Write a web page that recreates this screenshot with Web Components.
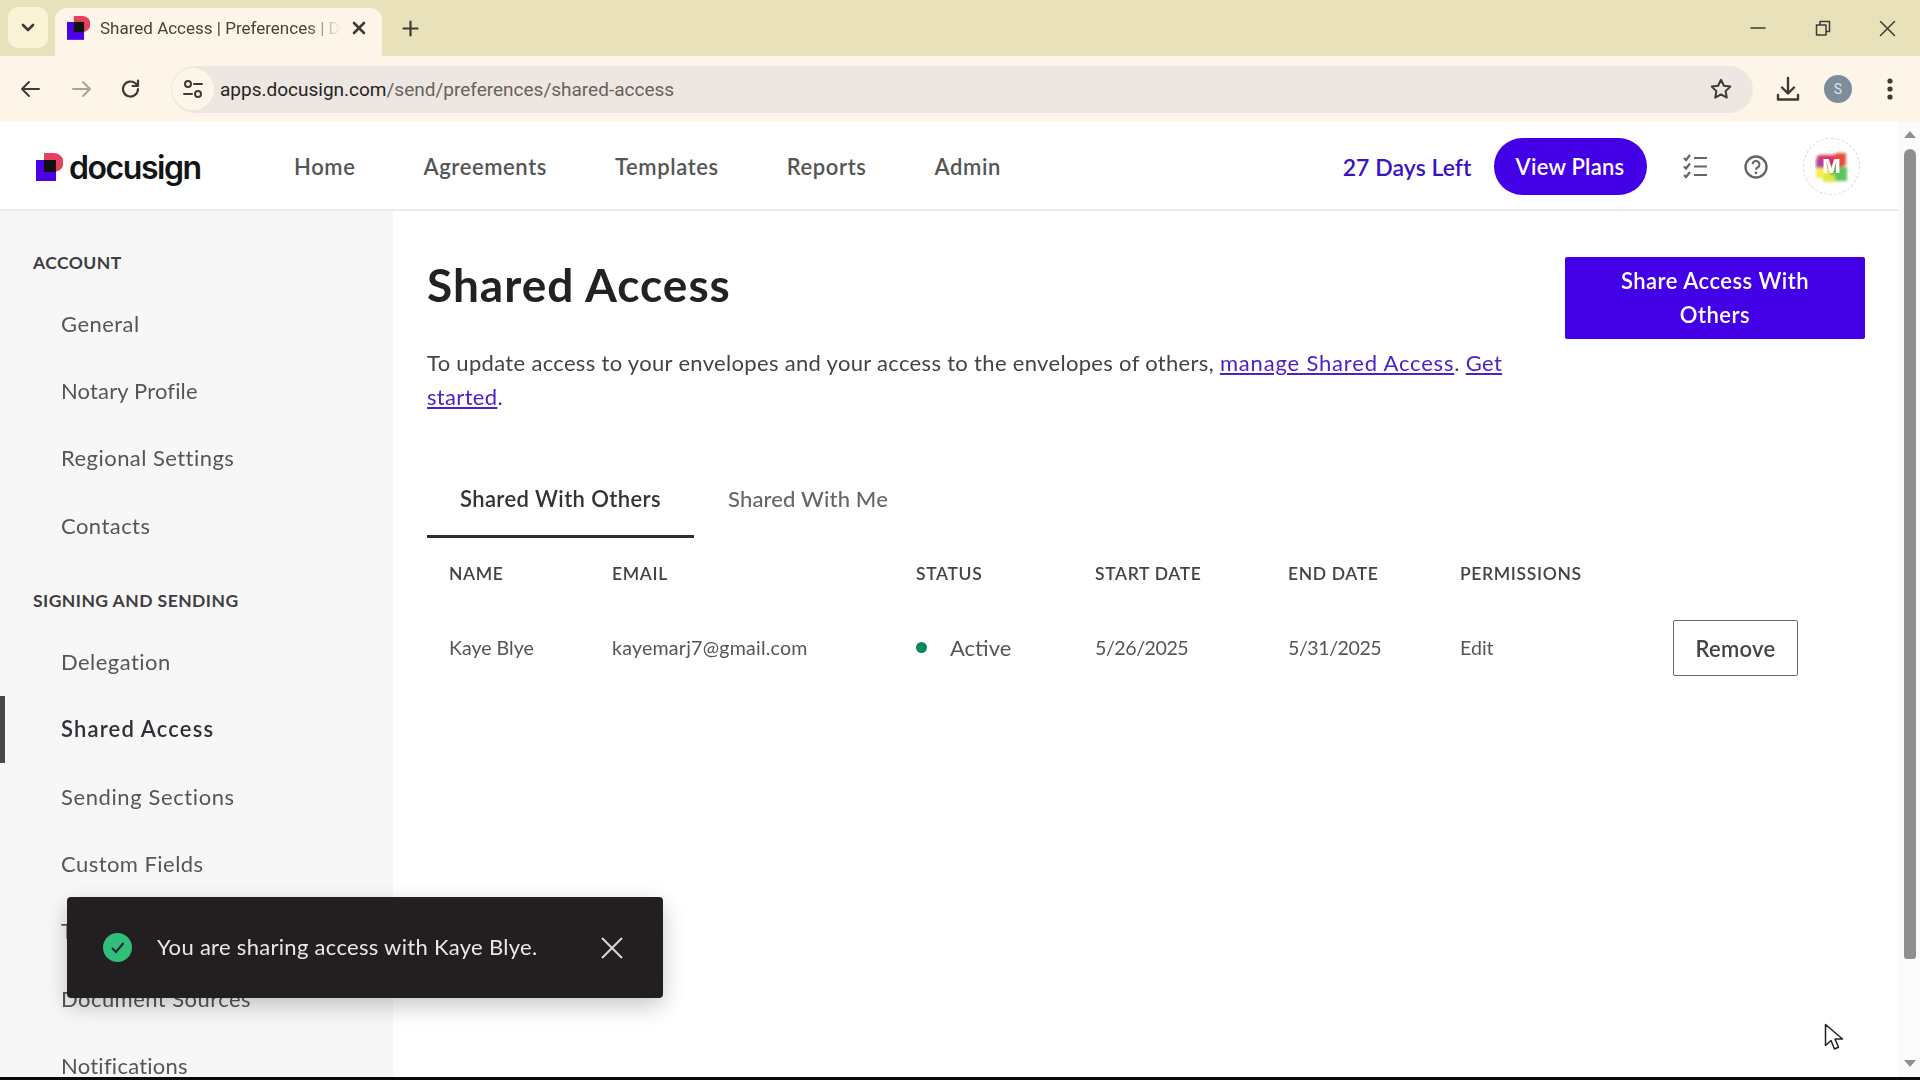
<!DOCTYPE html>
<html lang="en"><head><meta charset="utf-8"><title>Shared Access | Preferences | Docusign</title>
<style>html,body{margin:0;padding:0;height:100%;background:#fff;overflow:hidden}body{font-family:Lato,"Liberation Sans",sans-serif}</style>
</head><body>
<app-window>
  <browser-chrome slot="chrome"></browser-chrome>
  <ds-header slot="header"></ds-header>
  <side-nav slot="side">
    <nav-head>ACCOUNT</nav-head>
    <nav-item>General</nav-item><nav-item style="letter-spacing:.15px">Notary Profile</nav-item><nav-item>Regional Settings</nav-item><nav-item>Contacts</nav-item>
    <nav-head class="next">SIGNING AND SENDING</nav-head>
    <nav-item>Delegation</nav-item><nav-item active>Shared Access</nav-item><nav-item style="letter-spacing:.6px">Sending Sections</nav-item><nav-item>Custom Fields</nav-item><nav-item>Templates</nav-item><nav-item>Document Sources</nav-item><nav-item style="letter-spacing:.25px">Notifications</nav-item>
  </side-nav>
  <shared-page slot="main"></shared-page>
  <scroll-rail slot="rail"></scroll-rail>
  <toast-note slot="over">You are sharing access with Kaye Blye.</toast-note>
  <mouse-cursor slot="over"></mouse-cursor>
</app-window>
<script>
const UI='Lato,"Liberation Sans",sans-serif';
function el(name,html,ready){customElements.define(name,class extends HTMLElement{constructor(){super();this.attachShadow({mode:'open'}).innerHTML=html}connectedCallback(){ready&&ready(this)}})}
el('app-window',`<style>
:host{display:flex;flex-direction:column;width:1920px;height:1080px;overflow:hidden;position:relative;color:#222;filter:blur(.35px)}
.row{flex:1;display:flex;min-height:0}
.page{flex:1;display:flex;flex-direction:column;min-width:0}
.body{flex:1;display:flex;min-height:0;overflow:hidden}
.foot{height:3px;background:#0a0a0a;flex:none}
</style><slot name="chrome"></slot>
<div class="row"><div class="page"><slot name="header"></slot><div class="body"><slot name="side"></slot><slot name="main"></slot></div></div><slot name="rail"></slot></div>
<div class="foot"></div><slot name="over"></slot>`);
const ic=(w,h,vb,inner)=>`<svg width="${w}" height="${h}" viewBox="${vb}" fill="none" stroke="#3c3b36" stroke-width="2" stroke-linecap="round" stroke-linejoin="round">${inner}</svg>`;
const mark=(s)=>`<svg width="${s}" height="${s*28/27}" viewBox="0 0 27 28"><path d="M8 0h10a9.500 9.500 0 0 1 0 19H8z" fill="#e8415f"/><rect x="0" y="7" width="20" height="21" fill="#4c00e6"/><path d="M8 7h12v12H8z" fill="#111"/></svg>`;
el('browser-chrome',`<style>
:host{display:block;flex:none;font-family:Roboto,"Liberation Sans",sans-serif}
.strip{height:56px;background:#e9e1ba;display:flex;align-items:flex-start;position:relative}
.drop{width:40px;height:41px;margin:7px 7px 0 8px;background:#fbf3d6;border-radius:10px;display:flex;align-items:center;justify-content:center;flex:none}
.tab{width:327px;height:48px;margin-top:8px;background:#fdf6e8;border-radius:12px 12px 0 0;display:flex;align-items:center;flex:none;padding-left:12px;box-sizing:border-box;padding-bottom:8px}
.tab .t{width:240px;margin-left:10px;white-space:nowrap;overflow:hidden;font-size:17px;color:#45433c;-webkit-mask-image:linear-gradient(90deg,#000 86%,transparent);mask-image:linear-gradient(90deg,#000 86%,transparent)}
.tab .x{margin-left:12px;display:flex}
.plus{margin:20px 0 0 20px;display:flex}
.win{margin-left:auto;display:flex;height:56px}
.win div{width:65px;display:flex;align-items:center;justify-content:center;padding-bottom:0}
.tool{height:66px;background:#fdf6e8;display:flex;align-items:center;box-sizing:border-box}
.b{width:26px;display:flex;justify-content:center;flex:none}
.url{flex:none;width:1582px;height:47px;margin-left:27px;background:#eee6e0;border-radius:24px;display:flex;align-items:center}
.chip{width:42px;height:42px;margin-left:1px;border-radius:50%;background:#fdf6e8;display:flex;align-items:center;justify-content:center;flex:none}
.addr{margin-left:6px;font-size:19px;color:#66635c;white-space:nowrap}.addr b{font-weight:400;color:#25241f}
.star{margin-left:auto;margin-right:20px;display:flex}
.prof{width:28px;height:28px;border-radius:50%;background:#7f8d9b;color:#dbe2e8;font-size:14px;display:flex;align-items:center;justify-content:center;flex:none}
</style>
<div class="strip">
 <div class="drop">${ic(14,9,'0 0 14 9','<path d="M2 2l5 5 5-5" stroke-width="2.6"/>')}</div>
 <div class="tab">${mark(23)}<span class="t">Shared Access | Preferences | Docusign</span><span class="x">${ic(14,14,'0 0 14 14','<path d="M2 2l10 10M12 2L2 12" stroke-width="2.6"/>')}</span></div>
 <div class="plus">${ic(17,17,'0 0 17 17','<path d="M8.500 1.500v14M1.500 8.500h14" stroke-width="2.2"/>')}</div>
 <div class="win"><div>${ic(16,4,'0 0 16 4','<path d="M1 2h14" stroke-width="1.6"/>')}</div><div>${ic(16,16,'0 0 16 16','<path d="M1.500 5h9.500v10H1.500zM5 5V1.500h9.500v10H11" stroke-width="1.5"/>')}</div><div>${ic(17,17,'0 0 17 17','<path d="M1.500 1.500l14 14M15.500 1.500l-14 14" stroke-width="1.5"/>')}</div></div>
</div>
<div class="tool">
 <div class="b" style="margin-left:17px">${ic(22,20,'0 0 22 20','<path d="M20 10H3M10 3l-7 7 7 7"/>')}</div>
 <div class="b" style="margin-left:26px">${ic(22,20,'0 0 22 20','<path d="M2 10h17M12 3l7 7-7 7" stroke="#a8a49a"/>')}</div>
 <div class="b" style="margin-left:23px">${ic(22,22,'0 0 22 22','<path d="M18 11a7.500 7.500 0 1 1-2.400-5.500L18 8M18 2.500V8h-5.500" stroke-width="2.2"/>')}</div>
 <div class="url">
  <div class="chip">${ic(22,20,'0 0 22 20','<circle cx="6" cy="5" r="3"/><path d="M12 5h8M2 15h8"/><circle cx="16" cy="15" r="3"/>')}</div>
  <span class="addr"><b>apps.docusign.com</b>/send/preferences/shared-access</span>
  <span class="star">${ic(24,24,'0 0 24 24','<path d="M12 2.800l2.900 6 6.400.8-4.700 4.500 1.200 6.500-5.800-3.200-5.800 3.200 1.200-6.500L2.700 9.600l6.400-.8z"/>')}</span>
 </div>
 <div class="b" style="margin-left:22px">${ic(24,26,'0 0 24 26','<path d="M12 2v15M6 11.500l6 6 6-6M2 19v4.500h20V19" stroke-width="2.4"/>')}</div>
 <div class="prof" style="margin-left:23px">S</div>
 <div class="b" style="margin-left:25px">${ic(6,22,'0 0 6 22','<circle cx="3" cy="3" r="1.6" fill="#3c3b36"/><circle cx="3" cy="11" r="1.6" fill="#3c3b36"/><circle cx="3" cy="19" r="1.6" fill="#3c3b36"/>')}</div>
</div>`);
el('ds-header',`<style>
:host{display:flex;flex:none;height:89px;box-sizing:border-box;border-bottom:2px solid #eceaec;padding-top:2px;background:#fff;align-items:center;font-family:${UI}}
.logo{display:flex;align-items:center;margin-left:36px;width:258px;flex:none}
.word{margin-left:6px;font:600 32px/1 Inter,sans-serif;letter-spacing:-1.45px;color:#141414;padding-top:2px}
nav{display:flex;gap:68px;font-size:22px;font-weight:600;color:#555;letter-spacing:.6px}
.right{margin-left:auto;display:flex;align-items:center;margin-right:38px}
.days{font-size:23px;font-weight:600;color:#3a12c4;margin-right:22px;letter-spacing:.05px}
.plans{width:153px;height:57px;border-radius:29px;background:#4300e6;color:#fff;font-size:22px;font-weight:600;letter-spacing:.25px;display:flex;align-items:center;justify-content:center}
.chk{margin-left:36px;display:flex}.hlp{margin-left:37px;display:flex}
.ava{margin-left:35.5px;width:57px;height:57px;border-radius:50%;border:1px dashed #d8d8d8;box-sizing:border-box;position:relative;display:flex;align-items:center;justify-content:center;overflow:hidden}
.ava svg{position:absolute;left:11px;top:12px}.ava b{position:relative;color:#fff;font:800 19px/1 Inter,sans-serif}
</style>
<div class="logo">${mark(27)}<span class="word">docusign</span></div>
<nav><span>Home</span><span>Agreements</span><span>Templates</span><span>Reports</span><span>Admin</span></nav>
<div class="right"><span class="days">27 Days Left</span><span class="plans">View Plans</span>
<span class="chk"><svg width="24" height="25" viewBox="0 0 24 25" fill="none" stroke="#666" stroke-width="2.2"><path d="M1 4l2 2 4-5M1 12.500l2 2 4-5M1 21l2 2 4-5"/><path d="M11 4h13M11 12.500h13M11 21h13"/></svg></span>
<span class="hlp"><svg width="24" height="24" viewBox="0 0 24 24" fill="none" stroke="#666" stroke-width="2.4"><circle cx="12" cy="12" r="10.500"/><path d="M8.600 9.300a3.400 3.400 0 1 1 5.200 2.900c-1.200.7-1.800 1.300-1.800 2.600" stroke-width="2.2"/><circle cx="12" cy="17.800" r="1.400" fill="#666" stroke="none"/></svg></span>
<span class="ava"><svg width="33" height="33" viewBox="0 0 33 33"><defs><filter id="bl"><feGaussianBlur stdDeviation="1.600"/></filter></defs><g filter="url(#bl)"><rect x="2" y="4" width="28" height="12" rx="3" fill="#d5305f"/><rect x="1" y="8" width="10" height="10" fill="#b0409a"/><rect x="20" y="2" width="11" height="12" fill="#e5503a"/><rect x="1" y="17" width="16" height="10" fill="#f3ee55"/><rect x="15" y="16" width="17" height="14" fill="#5cc45a"/><rect x="8" y="24" width="12" height="7" fill="#dbe84a"/></g></svg><b>M</b></span></div>`);
el('side-nav',`<style>:host{display:block;flex:none;width:393px;box-sizing:border-box;padding-top:33px;background:#f8f7f8;overflow:hidden;font-family:${UI}}</style><slot></slot>`);
el('nav-head',`<style>:host{display:flex;align-items:center;height:36px;margin-bottom:10.5px;padding-left:33px;font-size:17.5px;font-weight:700;letter-spacing:.45px;color:#3e3e42}:host(.next){margin-top:22px}</style><slot></slot>`);
el('nav-item',`<style>:host{display:flex;align-items:center;height:67.4px;padding:0 0 2px 61px;font-size:22px;letter-spacing:.45px;color:#55555a;position:relative;box-sizing:border-box}
:host([active]){font-weight:600;color:#303036;letter-spacing:1.15px;box-shadow:inset 5px 0 0 #47474c}</style><slot></slot>`);
el('shared-page',`<style>
:host{display:block;flex:1;min-width:0;box-sizing:border-box;padding:46px 33px 0 34px;font-family:${UI};color:#222}
.top{display:flex;gap:32px;align-items:flex-start}
.left{flex:1;min-width:0}
h1{margin:0;font-size:46px;line-height:56px;font-weight:700;color:#222;letter-spacing:1px}
p{margin:33px 0 0;font-size:22px;line-height:33.6px;color:#444;letter-spacing:.32px}
a{color:#4a22c8;text-decoration:underline}.m{letter-spacing:.82px}
.cta{flex:none;width:300px;height:82px;box-sizing:border-box;background:#4300e6;color:#fff;font-size:22px;font-weight:600;letter-spacing:.5px;line-height:34px;text-align:center;padding:7px 40px;border-radius:2px}
.tabs{display:flex;margin-top:46px;font-size:22px}
.tabs span{padding:0 34px 1px;height:79px;box-sizing:border-box;display:flex;align-items:center;font-weight:500;color:#666;letter-spacing:.15px}
.tabs .on{color:#333;font-weight:600;letter-spacing:.4px;box-shadow:inset 0 -3px 0 #2e2e2e;width:267px;justify-content:center;padding:0 0 1px}
.grid{display:grid;grid-template-columns:163px 304px 179px 193px 172px 213px 1fr}
.grid>div{padding-left:22px;display:flex;align-items:center;white-space:nowrap}
.h{height:71px;font-size:17.5px;font-weight:600;letter-spacing:.65px;color:#444;padding-bottom:1px;box-sizing:border-box}
.c{height:77px;font-size:19.6px;color:#555;padding-bottom:1px;box-sizing:border-box}
.grid>.rb{padding-top:1px;padding-bottom:0}
.em{letter-spacing:.22px}.dt{letter-spacing:-.45px}
.dot{width:11px;height:11px;border-radius:50%;background:#0a8a5b;margin-right:23px}
.act{font-size:22px;color:#555}
.rm{width:125px;height:56px;border:1px solid #6b6b6b;border-radius:2px;box-sizing:border-box;display:flex;align-items:center;justify-content:center;font-size:22px;font-weight:600;letter-spacing:.3px;color:#444}
</style>
<div class="top"><div class="left"><h1>Shared Access</h1>
<p>To update access to your envelopes and your access to the envelopes of others, <a class="m">manage Shared Access</a>. <a>Get started</a>.</p></div>
<div class="cta">Share Access With Others</div></div>
<div class="tabs"><span class="on">Shared With Others</span><span>Shared With Me</span></div>
<div class="grid">
<div class="h">NAME</div><div class="h">EMAIL</div><div class="h">STATUS</div><div class="h">START DATE</div><div class="h">END DATE</div><div class="h">PERMISSIONS</div><div class="h"></div>
<div class="c">Kaye Blye</div><div class="c em">kayemarj7@gmail.com</div><div class="c act"><i class="dot"></i>Active</div><div class="c dt">5/26/2025</div><div class="c dt">5/31/2025</div><div class="c">Edit</div><div class="c rb"><span class="rm">Remove</span></div>
</div>`);
el('scroll-rail',`<style>:host{flex:none;width:22px;background:#fbfbfb;display:flex;flex-direction:column;align-items:center;box-sizing:border-box;padding:9px 0 0 2px}
.up,.dn{width:0;height:0;border-left:6.5px solid transparent;border-right:6.5px solid transparent}
.up{border-bottom:7px solid #8f8f8f}.dn{border-top:7px solid #8f8f8f;margin-top:auto;margin-bottom:10px}
.th{width:12px;height:810px;margin-top:11px;background:#8f8f8f;border-radius:6px 6px 3px 3px}</style><div class="up"></div><div class="th"></div><div class="dn"></div>`);
el('toast-note',`<style>:host{position:absolute;left:67px;top:897px;width:596px;height:101px;box-sizing:border-box;background:#231f20;border-radius:4px;box-shadow:0 8px 22px rgba(0,0,0,.22);display:flex;align-items:center;padding-left:36px;color:#e9e7e7;font:400 22px ${UI}}
.t{margin-left:25px;white-space:nowrap;letter-spacing:.3px;padding-bottom:2px}.x{margin-left:auto;margin-right:39px;display:flex}</style>
<svg width="29" height="29" viewBox="0 0 29 29"><circle cx="14.500" cy="14.500" r="14.500" fill="#2fbf78"/><path d="M9 15l4 4 7.500-9" fill="none" stroke="#123" stroke-width="2"/></svg>
<span class="t"><slot></slot></span><span class="x"><svg width="24" height="24" viewBox="0 0 24 24" fill="none" stroke="#d8d6d6" stroke-width="2"><path d="M2 2l20 20M22 2L2 22"/></svg></span>`);
el('mouse-cursor',`<style>:host{position:absolute;left:1824px;top:1023px;display:block;width:20px;height:30px}</style><svg width="20" height="30" viewBox="0 0 20 30"><path d="M1.500 1.500v21l5.500-5 3.500 8.500 4-1.800-3.500-8.200h7.500z" fill="#fff" stroke="#222" stroke-width="1.500" stroke-linejoin="round"/></svg>`);
</script></body></html>
